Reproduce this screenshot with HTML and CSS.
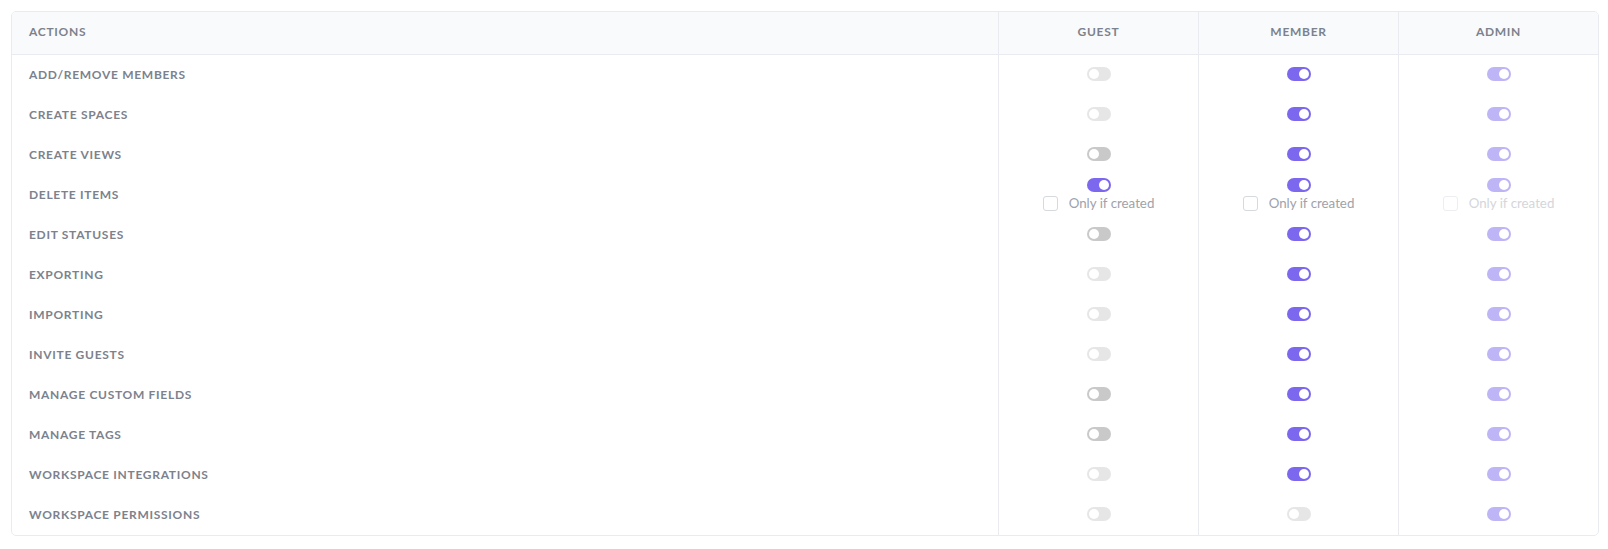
FILE: index.html
```html
<!DOCTYPE html>
<html>
<head>
<meta charset="utf-8">
<link rel="stylesheet" href="styles.css">
</head>
<body>
<div class="table">
  <div class="row head">
    <div class="cell label">Actions</div>
    <div class="cell role">Guest</div>
    <div class="cell role">Member</div>
    <div class="cell role">Admin</div>
  </div>

  <div class="row">
    <div class="cell label">Add/Remove members</div>
    <div class="cell ctl"><span class="tg off dis"></span></div>
    <div class="cell ctl"><span class="tg on"></span></div>
    <div class="cell ctl"><span class="tg on dis"></span></div>
  </div>
  <div class="row">
    <div class="cell label">Create spaces</div>
    <div class="cell ctl"><span class="tg off dis"></span></div>
    <div class="cell ctl"><span class="tg on"></span></div>
    <div class="cell ctl"><span class="tg on dis"></span></div>
  </div>
  <div class="row">
    <div class="cell label">Create views</div>
    <div class="cell ctl"><span class="tg off"></span></div>
    <div class="cell ctl"><span class="tg on"></span></div>
    <div class="cell ctl"><span class="tg on dis"></span></div>
  </div>
  <div class="row">
    <div class="cell label">Delete items</div>
    <div class="cell ctl stack"><span class="tg on"></span><label class="chk"><span class="box"></span>Only if created</label></div>
    <div class="cell ctl stack"><span class="tg on"></span><label class="chk"><span class="box"></span>Only if created</label></div>
    <div class="cell ctl stack"><span class="tg on dis"></span><label class="chk dis"><span class="box"></span>Only if created</label></div>
  </div>
  <div class="row">
    <div class="cell label">Edit statuses</div>
    <div class="cell ctl"><span class="tg off"></span></div>
    <div class="cell ctl"><span class="tg on"></span></div>
    <div class="cell ctl"><span class="tg on dis"></span></div>
  </div>
  <div class="row">
    <div class="cell label">Exporting</div>
    <div class="cell ctl"><span class="tg off dis"></span></div>
    <div class="cell ctl"><span class="tg on"></span></div>
    <div class="cell ctl"><span class="tg on dis"></span></div>
  </div>
  <div class="row">
    <div class="cell label">Importing</div>
    <div class="cell ctl"><span class="tg off dis"></span></div>
    <div class="cell ctl"><span class="tg on"></span></div>
    <div class="cell ctl"><span class="tg on dis"></span></div>
  </div>
  <div class="row">
    <div class="cell label">Invite guests</div>
    <div class="cell ctl"><span class="tg off dis"></span></div>
    <div class="cell ctl"><span class="tg on"></span></div>
    <div class="cell ctl"><span class="tg on dis"></span></div>
  </div>
  <div class="row">
    <div class="cell label">Manage custom fields</div>
    <div class="cell ctl"><span class="tg off"></span></div>
    <div class="cell ctl"><span class="tg on"></span></div>
    <div class="cell ctl"><span class="tg on dis"></span></div>
  </div>
  <div class="row">
    <div class="cell label">Manage tags</div>
    <div class="cell ctl"><span class="tg off"></span></div>
    <div class="cell ctl"><span class="tg on"></span></div>
    <div class="cell ctl"><span class="tg on dis"></span></div>
  </div>
  <div class="row">
    <div class="cell label">Workspace integrations</div>
    <div class="cell ctl"><span class="tg off dis"></span></div>
    <div class="cell ctl"><span class="tg on"></span></div>
    <div class="cell ctl"><span class="tg on dis"></span></div>
  </div>
  <div class="row">
    <div class="cell label">Workspace permissions</div>
    <div class="cell ctl"><span class="tg off dis"></span></div>
    <div class="cell ctl"><span class="tg off dis"></span></div>
    <div class="cell ctl"><span class="tg on dis"></span></div>
  </div>
</div>
</body>
</html>
```

FILE: styles.css
```css
* { box-sizing: border-box; }
html, body { background: #fff; }
body {
  margin: 11px 9px 0 11px;
  font-family: Lato, "Open Sans", Arial, sans-serif;
}
.table {
  border: 1px solid #e9ebf0;
  border-radius: 5px;
  overflow: hidden;
}
.row {
  display: grid;
  grid-template-columns: 1fr 200px 200px 200px;
  height: 40px;
}
.row.head {
  height: 43px;
  background: #f9fafb;
  border-bottom: 1px solid #e9ebf0;
}
.cell {
  display: flex;
  align-items: center;
}
.cell + .cell { border-left: 1px solid #e9ebf0; }
.label {
  padding-left: 17px;
  padding-bottom: 2px;
  font-size: 12px;
  font-weight: 700;
  letter-spacing: 0.7px;
  text-transform: uppercase;
  color: #7c828d;
}
.head .cell { padding-bottom: 3px; }
.role {
  justify-content: center;
  font-size: 12px;
  font-weight: 700;
  letter-spacing: 0.7px;
  text-transform: uppercase;
  color: #7c828d;
}
.ctl { justify-content: center; padding-bottom: 2px; }
.stack {
  flex-direction: column;
  gap: 4px;
}
.tg {
  position: relative;
  display: block;
  width: 24px;
  height: 14px;
  border-radius: 7px;
}
.tg::after {
  content: "";
  position: absolute;
  top: 2px;
  width: 10px;
  height: 10px;
  border-radius: 50%;
  background: #fff;
}
.tg.on { background: #7b68ee; }
.tg.on::after { right: 2px; }
.tg.on.dis { background: #bdb5f5; }
.tg.off { background: #c9c9c9; }
.tg.off::after { left: 2px; }
.tg.off.dis { background: #e6e6e6; }
.chk {
  display: flex;
  align-items: center;
  gap: 11px;
  height: 15px;
  font-size: 13.3px;
  font-weight: 400;
  color: #9ea2ab;
}
.box {
  display: block;
  width: 15px;
  height: 15px;
  border: 1px solid #d6d9de;
  border-radius: 3px;
  background: #fff;
}
.chk.dis { color: #d4d6db; }
.chk.dis .box { border-color: #eceef1; }
```
